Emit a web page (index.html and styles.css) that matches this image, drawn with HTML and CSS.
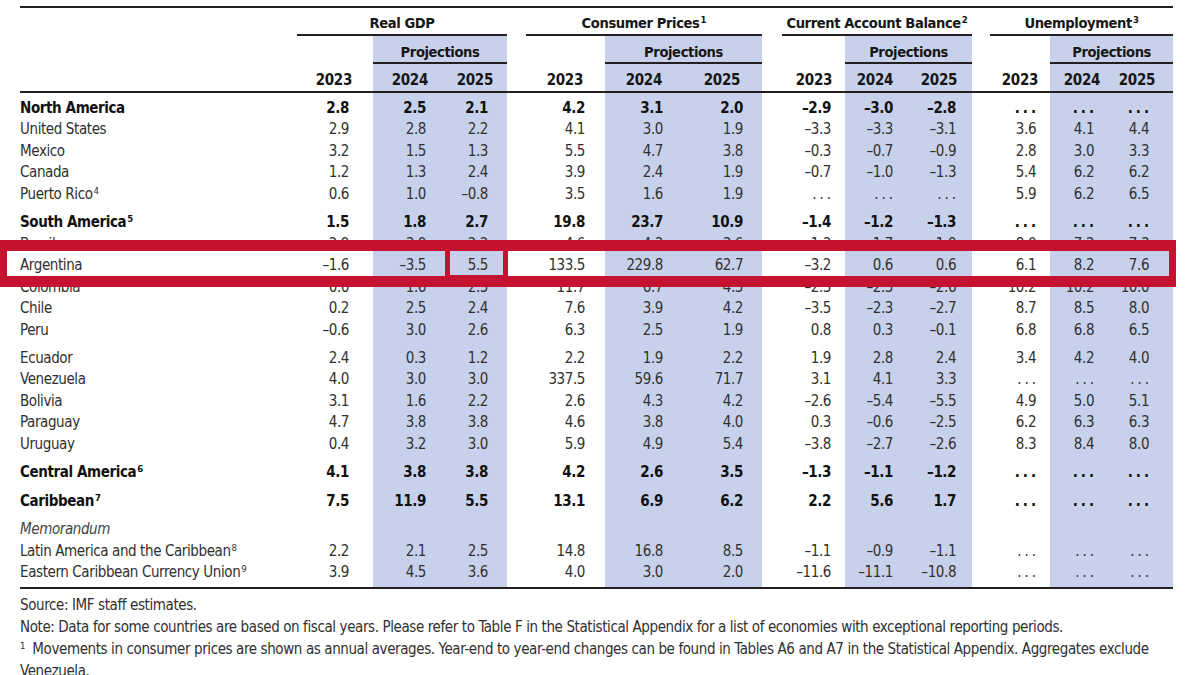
FILE: index.html
```html
<!DOCTYPE html>
<html>
<head>
<meta charset="utf-8">
<title>Western Hemisphere: Real GDP, Consumer Prices, Current Account Balance, and Unemployment</title>
<link rel="stylesheet" href="styles.css">
</head>
<body>
<div class="page">
  <table class="tbl">
    <colgroup>
      <col class="w-lbl">
      <col class="w-g1"><col class="w-g2 p"><col class="w-g3 p">
      <col class="w-gap1">
      <col class="w-c1"><col class="w-c2 p"><col class="w-c3 p">
      <col class="w-gap2">
      <col class="w-a1"><col class="w-a2 p"><col class="w-a3 p">
      <col class="w-gap3">
      <col class="w-u1"><col class="w-u2 p"><col class="w-u3 p">
    </colgroup>
    <thead>
      <tr class="h1">
        <th></th><th colspan="3" class="grp">Real GDP</th><th></th>
        <th colspan="3" class="grp">Consumer Prices<sup>1</sup></th><th></th>
        <th colspan="3" class="grp">Current Account Balance<sup>2</sup></th><th></th>
        <th colspan="3" class="grp">Unemployment<sup>3</sup></th>
      </tr>
      <tr class="h2">
        <th></th><th></th><th colspan="2" class="pj">Projections</th><th></th>
        <th></th><th colspan="2" class="pj">Projections</th><th></th>
        <th></th><th colspan="2" class="pj">Projections</th><th></th>
        <th></th><th colspan="2" class="pj">Projections</th>
      </tr>
      <tr class="h3">
        <th></th><th>2023</th><th>2024</th><th>2025</th><th></th>
        <th>2023</th><th>2024</th><th>2025</th><th></th>
        <th>2023</th><th>2024</th><th>2025</th><th></th>
        <th>2023</th><th>2024</th><th>2025</th>
      </tr>
    </thead>
    <tbody>
      <tr class="b first"><td>North America</td><td>2.8</td><td>2.5</td><td>2.1</td><td></td><td>4.2</td><td>3.1</td><td>2.0</td><td></td><td>–2.9</td><td>–3.0</td><td>–2.8</td><td></td><td><span class="na">...</span></td><td><span class="na">...</span></td><td><span class="na">...</span></td></tr>
      <tr><td>United States</td><td>2.9</td><td>2.8</td><td>2.2</td><td></td><td>4.1</td><td>3.0</td><td>1.9</td><td></td><td>–3.3</td><td>–3.3</td><td>–3.1</td><td></td><td>3.6</td><td>4.1</td><td>4.4</td></tr>
      <tr><td>Mexico</td><td>3.2</td><td>1.5</td><td>1.3</td><td></td><td>5.5</td><td>4.7</td><td>3.8</td><td></td><td>–0.3</td><td>–0.7</td><td>–0.9</td><td></td><td>2.8</td><td>3.0</td><td>3.3</td></tr>
      <tr><td>Canada</td><td>1.2</td><td>1.3</td><td>2.4</td><td></td><td>3.9</td><td>2.4</td><td>1.9</td><td></td><td>–0.7</td><td>–1.0</td><td>–1.3</td><td></td><td>5.4</td><td>6.2</td><td>6.2</td></tr>
      <tr><td>Puerto Rico<sup>4</sup></td><td>0.6</td><td>1.0</td><td>–0.8</td><td></td><td>3.5</td><td>1.6</td><td>1.9</td><td></td><td><span class="na">...</span></td><td><span class="na">...</span></td><td><span class="na">...</span></td><td></td><td>5.9</td><td>6.2</td><td>6.5</td></tr>
      <tr class="b sp"><td>South America<sup>5</sup></td><td>1.5</td><td>1.8</td><td>2.7</td><td></td><td>19.8</td><td>23.7</td><td>10.9</td><td></td><td>–1.4</td><td>–1.2</td><td>–1.3</td><td></td><td><span class="na">...</span></td><td><span class="na">...</span></td><td><span class="na">...</span></td></tr>
      <tr><td>Brazil</td><td>2.9</td><td>3.0</td><td>2.2</td><td></td><td>4.6</td><td>4.3</td><td>3.6</td><td></td><td>–1.3</td><td>–1.7</td><td>–1.9</td><td></td><td>8.0</td><td>7.2</td><td>7.3</td></tr>
      <tr><td>Argentina</td><td>–1.6</td><td>–3.5</td><td>5.5</td><td></td><td>133.5</td><td>229.8</td><td>62.7</td><td></td><td>–3.2</td><td>0.6</td><td>0.6</td><td></td><td>6.1</td><td>8.2</td><td>7.6</td></tr>
      <tr><td>Colombia</td><td>0.6</td><td>1.6</td><td>2.5</td><td></td><td>11.7</td><td>6.7</td><td>4.3</td><td></td><td>–2.3</td><td>–2.3</td><td>–2.6</td><td></td><td>10.2</td><td>10.2</td><td>10.0</td></tr>
      <tr><td>Chile</td><td>0.2</td><td>2.5</td><td>2.4</td><td></td><td>7.6</td><td>3.9</td><td>4.2</td><td></td><td>–3.5</td><td>–2.3</td><td>–2.7</td><td></td><td>8.7</td><td>8.5</td><td>8.0</td></tr>
      <tr><td>Peru</td><td>–0.6</td><td>3.0</td><td>2.6</td><td></td><td>6.3</td><td>2.5</td><td>1.9</td><td></td><td>0.8</td><td>0.3</td><td>–0.1</td><td></td><td>6.8</td><td>6.8</td><td>6.5</td></tr>
      <tr class="sp"><td>Ecuador</td><td>2.4</td><td>0.3</td><td>1.2</td><td></td><td>2.2</td><td>1.9</td><td>2.2</td><td></td><td>1.9</td><td>2.8</td><td>2.4</td><td></td><td>3.4</td><td>4.2</td><td>4.0</td></tr>
      <tr><td>Venezuela</td><td>4.0</td><td>3.0</td><td>3.0</td><td></td><td>337.5</td><td>59.6</td><td>71.7</td><td></td><td>3.1</td><td>4.1</td><td>3.3</td><td></td><td><span class="na">...</span></td><td><span class="na">...</span></td><td><span class="na">...</span></td></tr>
      <tr><td>Bolivia</td><td>3.1</td><td>1.6</td><td>2.2</td><td></td><td>2.6</td><td>4.3</td><td>4.2</td><td></td><td>–2.6</td><td>–5.4</td><td>–5.5</td><td></td><td>4.9</td><td>5.0</td><td>5.1</td></tr>
      <tr><td>Paraguay</td><td>4.7</td><td>3.8</td><td>3.8</td><td></td><td>4.6</td><td>3.8</td><td>4.0</td><td></td><td>0.3</td><td>–0.6</td><td>–2.5</td><td></td><td>6.2</td><td>6.3</td><td>6.3</td></tr>
      <tr><td>Uruguay</td><td>0.4</td><td>3.2</td><td>3.0</td><td></td><td>5.9</td><td>4.9</td><td>5.4</td><td></td><td>–3.8</td><td>–2.7</td><td>–2.6</td><td></td><td>8.3</td><td>8.4</td><td>8.0</td></tr>
      <tr class="b sp"><td>Central America<sup>6</sup></td><td>4.1</td><td>3.8</td><td>3.8</td><td></td><td>4.2</td><td>2.6</td><td>3.5</td><td></td><td>–1.3</td><td>–1.1</td><td>–1.2</td><td></td><td><span class="na">...</span></td><td><span class="na">...</span></td><td><span class="na">...</span></td></tr>
      <tr class="b sp"><td>Caribbean<sup>7</sup></td><td>7.5</td><td>11.9</td><td>5.5</td><td></td><td>13.1</td><td>6.9</td><td>6.2</td><td></td><td>2.2</td><td>5.6</td><td>1.7</td><td></td><td><span class="na">...</span></td><td><span class="na">...</span></td><td><span class="na">...</span></td></tr>
      <tr class="sp memo"><td>Memorandum</td><td></td><td></td><td></td><td></td><td></td><td></td><td></td><td></td><td></td><td></td><td></td><td></td><td></td><td></td><td></td></tr>
      <tr><td>Latin America and the Caribbean<sup>8</sup></td><td>2.2</td><td>2.1</td><td>2.5</td><td></td><td>14.8</td><td>16.8</td><td>8.5</td><td></td><td>–1.1</td><td>–0.9</td><td>–1.1</td><td></td><td><span class="na">...</span></td><td><span class="na">...</span></td><td><span class="na">...</span></td></tr>
      <tr class="last"><td>Eastern Caribbean Currency Union<sup>9</sup></td><td>3.9</td><td>4.5</td><td>3.6</td><td></td><td>4.0</td><td>3.0</td><td>2.0</td><td></td><td>–11.6</td><td>–11.1</td><td>–10.8</td><td></td><td><span class="na">...</span></td><td><span class="na">...</span></td><td><span class="na">...</span></td></tr>
    </tbody>
  </table>

  <div class="notes">
    <p>Source: IMF staff estimates.</p>
    <p>Note: Data for some countries are based on fiscal years. Please refer to Table F in the Statistical Appendix for a list of economies with exceptional reporting periods.</p>
    <p><sup>1</sup> Movements in consumer prices are shown as annual averages. Year-end to year-end changes can be found in Tables A6 and A7 in the Statistical Appendix. Aggregates exclude Venezuela.</p>
  </div>

  <div class="hl" aria-hidden="true"></div>
  <div class="hl-cell" aria-hidden="true"></div>
</div>
</body>
</html>
```

FILE: styles.css
```css
* { box-sizing: border-box; }

html, body {
  margin: 0;
  padding: 0;
  background: #ffffff;
}

body {
  font-family: "DejaVu Sans Condensed", "Liberation Sans Narrow", "Liberation Sans", sans-serif;
  font-size: 15px;
  letter-spacing: -0.4px;
  color: #303030;
}

.page {
  position: relative;
  width: 1200px;
  height: 675px;
  overflow: hidden;
  padding: 6px 0 0 20px;
}

/* ---------- table ---------- */
.tbl {
  width: 1153px;
  table-layout: fixed;
  border-collapse: separate;
  border-spacing: 0;
  border-top: 2px solid #231f20;
  border-bottom: 2px solid #231f20;
}

.w-lbl { width: 277px; }
.w-g1 { width: 76px; }
.w-g2 { width: 67px; }
.w-g3 { width: 67px; }
.w-gap1 { width: 19px; }
.w-c1 { width: 79px; }
.w-c2 { width: 78px; }
.w-c3 { width: 79px; }
.w-gap2 { width: 20px; }
.w-a1 { width: 63px; }
.w-a2 { width: 63px; }
.w-a3 { width: 64px; }
.w-gap3 { width: 18px; }
.w-u1 { width: 60px; }
.w-u2 { width: 61px; }
.w-u3 { width: 62px; }

col.p { background: #c8d1eb; }

.tbl th,
.tbl td {
  padding: 0;
  white-space: nowrap;
}

.tbl th {
  font-weight: 700;
  color: #161616;
  font-size: 14.6px;
  letter-spacing: -0.4px;
}

/* header row 1: group titles */
.h1 th {
  background: #ffffff;
  padding: 4px 0 0;
  line-height: 22px;
  text-align: center;
}
.h1 th.grp { border-bottom: 2px solid #231f20; }

/* header row 2: projections */
.h2 th {
  padding: 5px 0 0;
  line-height: 21px;
  text-align: center;
}
.h2 th.pj {
  background: #c8d1eb;
  border-bottom: 2px solid #231f20;
}

/* header row 3: years */
.h3 th {
  padding: 5px 0 0;
  line-height: 22px;
  font-size: 15px;
  letter-spacing: -0.3px;
  text-align: right;
  border-bottom: 2px solid #231f20;
}
.h3 th:nth-child(2) { padding-right: 21px; }
.h3 th:nth-child(3) { padding-right: 12px; }
.h3 th:nth-child(4) { padding-right: 14px; }
.h3 th:nth-child(6) { padding-right: 22px; }
.h3 th:nth-child(7) { padding-right: 21px; }
.h3 th:nth-child(8) { padding-right: 22px; }
.h3 th:nth-child(10) { padding-right: 13px; }
.h3 th:nth-child(11) { padding-right: 15px; }
.h3 th:nth-child(12) { padding-right: 15px; }
.h3 th:nth-child(14) { padding-right: 12px; }
.h3 th:nth-child(15) { padding-right: 11px; }
.h3 th:nth-child(16) { padding-right: 18px; }

/* body */
.tbl tbody td {
  line-height: 21.45px;
  text-align: right;
}
.tbl tbody td:first-child { text-align: left; }

.tbl tbody td:nth-child(2) { padding-right: 24px; }
.tbl tbody td:nth-child(3) { padding-right: 14px; }
.tbl tbody td:nth-child(4) { padding-right: 19px; }
.tbl tbody td:nth-child(6) { padding-right: 20px; }
.tbl tbody td:nth-child(7) { padding-right: 20px; }
.tbl tbody td:nth-child(8) { padding-right: 19px; }
.tbl tbody td:nth-child(10) { padding-right: 14px; }
.tbl tbody td:nth-child(11) { padding-right: 15px; }
.tbl tbody td:nth-child(12) { padding-right: 16px; }
.tbl tbody td:nth-child(14) { padding-right: 14px; }
.tbl tbody td:nth-child(15) { padding-right: 17px; }
.tbl tbody td:nth-child(16) { padding-right: 24px; }

.tbl tbody tr.first td { padding-top: 5px; }
.tbl tbody tr.sp td { padding-top: 7px; }
.tbl tbody tr.last td { padding-bottom: 3px; }

.tbl tbody tr.b td {
  font-weight: 700;
  color: #111111;
}

.tbl tbody tr.memo td {
  font-style: italic;
  color: #444444;
}

sup {
  font-size: 9.5px;
  line-height: 0;
  vertical-align: 5px;
  margin-left: 1px;
  letter-spacing: 0;
}

.na {
  letter-spacing: 3px;
  margin-right: -3px;
}

/* ---------- notes ---------- */
.notes {
  width: 1153px;
  margin-top: 5px;
  line-height: 22px;
  font-size: 15px;
  letter-spacing: -0.4px;
  color: #303030;
}
.notes p { margin: 0; }
.notes sup { margin-left: 0; margin-right: 3px; }

/* ---------- red highlight annotation ---------- */
.hl {
  position: absolute;
  left: 0;
  top: 240px;
  width: 1176px;
  height: 47px;
  border-style: solid;
  border-color: #c41230;
  border-width: 11px 7px;
}

.hl-cell {
  position: absolute;
  left: 445px;
  top: 243px;
  width: 63px;
  height: 37px;
  border: 5px solid #c41230;
}
```
